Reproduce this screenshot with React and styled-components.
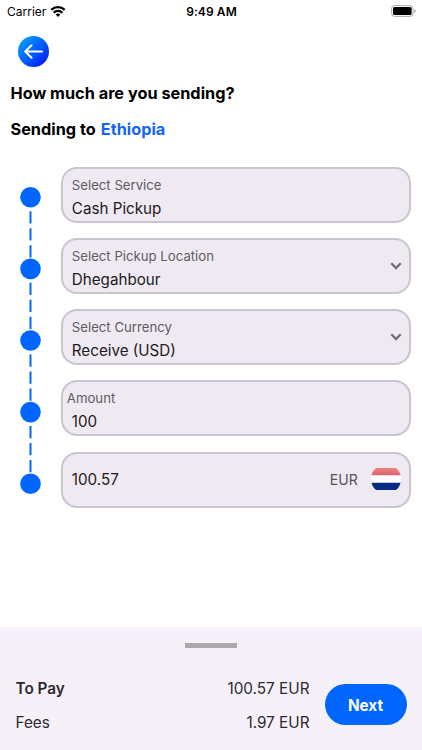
import React from "react";
import styled, { createGlobalStyle } from "styled-components";

const GlobalStyle = createGlobalStyle`
  * { box-sizing: border-box; }
  body { margin: 0; background: #fff; overflow: hidden; }
`;

const Screen = styled.div`
  width: 422px;
  height: 750px;
  display: flex;
  flex-direction: column;
  background: #fff;
  color: #000;
  font-family: Inter, "Liberation Sans", sans-serif;
  white-space: nowrap;
`;

const StatusBar = styled.header`
  height: 22px;
  padding: 0 6px 0 7px;
  display: grid;
  grid-template-columns: 1fr auto 1fr;
  align-items: center;
`;

const Carrier = styled.div`
  display: flex;
  align-items: center;
  gap: 4px;
  font-size: 12px;
  letter-spacing: 0;
`;

const Clock = styled.time`
  font-size: 12px;
  font-weight: 600;
  letter-spacing: 0.1px;
`;

const Battery = styled.svg`
  justify-self: end;
  display: block;
`;

const BackButton = styled.button`
  width: 31px;
  height: 31px;
  margin: 14px 0 0 18px;
  padding: 0;
  border: 0;
  border-radius: 50%;
  display: flex;
  align-items: center;
  justify-content: center;
  background: linear-gradient(135deg, #00a8ff 5%, #0060ff 50%, #0010ff 95%);
`;

const Heading = styled.h1`
  margin: 15px 0 0 10.5px;
  font-size: 16.3px;
  line-height: 22px;
  font-weight: 700;
`;

const Destination = styled.h2`
  margin: 14px 0 0 10.5px;
  display: flex;
  gap: 5px;
  font-size: 16.3px;
  line-height: 22px;
  font-weight: 700;
`;

const Country = styled.span`
  color: #1466f4;
`;

const Form = styled.main`
  display: grid;
  grid-template-columns: 21px 350px;
  column-gap: 20px;
  margin: 26.5px 0 0 20.3px;
`;

const Timeline = styled.svg`
  display: block;
  margin-top: 20px;
`;

const Fields = styled.div`
  display: flex;
  flex-direction: column;
  gap: 15.3px;
`;

const Field = styled.div`
  height: 56px;
  padding: 0 8.5px;
  display: flex;
  align-items: center;
  justify-content: space-between;
  border: 2px solid #cac4d0;
  border-radius: 16px;
  background: #efe9f1;
`;

const FieldText = styled.div`
  padding-top: ${(p) => (p.$labelled ? "5px" : "0")};
  display: flex;
  flex-direction: column;
  gap: 2px;
`;

const Label = styled.label`
  margin-left: ${(p) => (p.$outdent ? "-5px" : "0")};
  font-size: 13.2px;
  line-height: 21px;
  color: #605c66;
`;

const Value = styled.span`
  font-size: 15.2px;
  line-height: 22px;
  color: #1d1b20;
`;

const Currency = styled.span`
  display: flex;
  align-items: center;
  gap: 13px;
  font-size: 14.1px;
  color: #56525b;
`;

const Chevron = styled.svg`
  display: block;
  margin: 0 -1px 0 0;
`;

const FlagIcon = styled.svg`
  display: block;
  margin-bottom: 2px;
`;

const Footer = styled.footer`
  height: 123px;
  margin-top: auto;
  padding: 16px 15.5px 0;
  background: #f6f1f9;
`;

const Handle = styled.div`
  width: 52px;
  height: 5px;
  margin: 0 auto;
  background: #aaa8ab;
`;

const Payment = styled.div`
  display: flex;
  gap: 15px;
  margin-top: 29px;
`;

const Totals = styled.div`
  width: 294.5px;
  padding-top: 1px;
  display: flex;
  flex-direction: column;
  gap: 12px;
`;

const TotalRow = styled.div`
  display: flex;
  justify-content: space-between;
  font-size: 15.3px;
  line-height: 22px;
  color: #2b2930;
`;

const TotalName = styled.span`
  font-weight: ${(p) => (p.$strong ? 600 : 400)};
`;

const NextButton = styled.button`
  width: 82px;
  height: 41px;
  margin-top: 7px;
  padding: 1px 0 0;
  border: 0;
  border-radius: 21px;
  flex: none;
  background: #0066ff;
  color: #fff;
  font: 700 15.3px Inter, sans-serif;
`;

const dots = [0, 1, 2, 3, 4];
const PITCH = 71.6;

function Steps() {
  return (
    <Timeline width="21" height="310" viewBox="0 0 21 310" fill="#0066ff">
      {dots.map((i) => (
        <g key={i} transform={`translate(0 ${i * PITCH})`}>
          <circle cx="10.5" cy="10.3" r="10.3" />
          {i < 4 && <path d="M9.5 24.2h2v12.3h-2zM9.5 41.2h2v12.3h-2zM9.5 58.2h2v12.3h-2z" />}
        </g>
      ))}
    </Timeline>
  );
}

function Flag() {
  return (
    <FlagIcon width="30" height="22" viewBox="0 0 30 22">
      <defs>
        <linearGradient id="flag-red" x2="0" y2="1">
          <stop stopColor="#ea8585" />
          <stop offset="1" stopColor="#dc646b" />
        </linearGradient>
        <clipPath id="flag-shape">
          <path d="M5 0h20q5 4 5 11t-5 11H5Q0 18 0 11T5 0z" />
        </clipPath>
      </defs>
      <g clipPath="url(#flag-shape)">
        <path fill="#fff" d="M0 0h30v22H0z" />
        <path fill="url(#flag-red)" d="M0 0h30v7.3H0z" />
        <path fill="#052b85" d="M0 14.7h30V22H0z" />
      </g>
    </FlagIcon>
  );
}

const fields = [
  { label: "Select Service", value: "Cash Pickup" },
  { label: "Select Pickup Location", value: "Dhegahbour", menu: true },
  { label: "Select Currency", value: "Receive (USD)", menu: true },
  { label: "Amount", value: "100", outdent: true },
  { value: "100.57", currency: "EUR" },
];

export default function App() {
  return (
    <>
      <GlobalStyle />
      <Screen>
        <StatusBar>
          <Carrier>
            Carrier
            <svg width="16" height="11" viewBox="0 0 15 11" fill="none" stroke="#000" strokeWidth="2.2">
              <path d="M.8 3.9a9.5 9.5 0 0 1 13.4 0M3.1 6.7a6.2 6.2 0 0 1 8.8 0" />
              <path d="M5.2 8.6a3.3 3.3 0 0 1 4.6 0L7.5 11z" fill="#000" stroke="none" />
            </svg>
          </Carrier>
          <Clock>9:49 AM</Clock>
          <Battery width="25" height="12" viewBox="0 0 25 12">
            <rect x=".6" y=".6" width="21.4" height="10.8" rx="3" fill="#fff" stroke="#aaa" />
            <rect x="2" y="2" width="18.6" height="8" rx="1.5" />
            <path d="M23.4 4v4q1.2-.5 1.2-2t-1.2-2z" fill="#999" />
          </Battery>
        </StatusBar>
        <BackButton aria-label="Back">
          <svg width="19" height="15" viewBox="0 0 19 15" fill="none" stroke="#fff" strokeWidth="2" strokeLinecap="round" strokeLinejoin="round">
            <path d="M18 7.5H1.2M7.5 1.2L1.2 7.5l6.3 6.3" />
          </svg>
        </BackButton>
        <Heading>How much are you sending?</Heading>
        <Destination>
          <span>Sending to</span>
          <Country>Ethiopia</Country>
        </Destination>
        <Form>
          <Steps />
          <Fields>
            {fields.map((f) => (
              <Field key={f.value}>
                <FieldText $labelled={Boolean(f.label)}>
                  {f.label && <Label $outdent={f.outdent}>{f.label}</Label>}
                  <Value>{f.value}</Value>
                </FieldText>
                {f.menu && (
                  <Chevron width="12" height="8" viewBox="0 0 12 8" fill="none" stroke="#716c76" strokeWidth="2.3">
                    <path d="M1.3 1.3L6 6l4.7-4.7" />
                  </Chevron>
                )}
                {f.currency && (
                  <Currency>
                    {f.currency}
                    <Flag />
                  </Currency>
                )}
              </Field>
            ))}
          </Fields>
        </Form>
        <Footer>
          <Handle />
          <Payment>
            <Totals>
              <TotalRow>
                <TotalName $strong>To Pay</TotalName>
                <span>100.57 EUR</span>
              </TotalRow>
              <TotalRow>
                <TotalName>Fees</TotalName>
                <span>1.97 EUR</span>
              </TotalRow>
            </Totals>
            <NextButton>Next</NextButton>
          </Payment>
        </Footer>
      </Screen>
    </>
  );
}
